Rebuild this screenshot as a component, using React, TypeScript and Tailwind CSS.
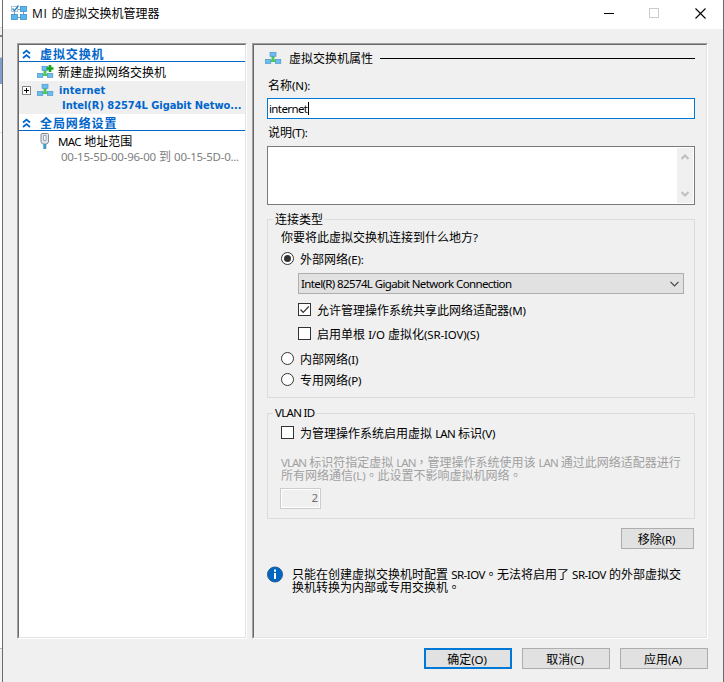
import React, { ReactNode } from "react";

const uiFont = "font-['Noto_Sans','Noto_Sans_CJK_SC',sans-serif]";
const boldFont = "font-['DejaVu_Sans_Condensed','DejaVu_Sans','Noto_Sans_CJK_SC',sans-serif] font-bold";

function SwitchIcon({ plus }: { plus?: boolean }) {
  return (
    <svg width="17" height="14" viewBox="0 0 17 14" className="block">
      <path d="M5.500 10h5" stroke="#8fb9a8" strokeWidth="2" />
      <path d="M6.500 5h3v4h1v2h-5V9h1z" fill="#4fc94f" />
      <rect x="5" y="1.300" width="6" height="4" fill="#6cbcf0" stroke="#4a98cc" strokeWidth=".7" />
      <rect x=".4" y="8.400" width="5.400" height="4" fill="#6cbcf0" stroke="#4a98cc" strokeWidth=".7" />
      <rect x="10.400" y="8.400" width="5.400" height="4" fill="#6cbcf0" stroke="#4a98cc" strokeWidth=".7" />
      {plus && <path d="M13 0v7M9.500 3.500h7" stroke="#18a51c" strokeWidth="2.600" />}
    </svg>
  );
}

function ManagerIcon() {
  return (
    <svg width="17" height="16" viewBox="0 0 17 16" className="block shrink-0">
      <path d="M3.500 7v3M12.500 6v3M7 12.500h3M7 4.500h3" stroke="#8f999f" strokeWidth="1" />
      <rect x=".5" y="1.500" width="6" height="5" fill="#fff" stroke="#a8c4d8" />
      <path d="M1.500 3.500l2 2.200L7.500.5" stroke="#2f7fc4" strokeWidth="1.300" fill="none" />
      <rect x="9.500" y="1.500" width="6" height="5" fill="#55b7f0" stroke="#3f90c4" strokeWidth=".8" />
      <rect x=".5" y="9.500" width="6" height="5" fill="#55b7f0" stroke="#3f90c4" strokeWidth=".8" />
      <rect x="9.500" y="9.500" width="6" height="5" fill="#55b7f0" stroke="#3f90c4" strokeWidth=".8" />
    </svg>
  );
}

function AdapterIcon() {
  return (
    <svg width="10" height="16" viewBox="0 0 10 16" className="block shrink-0">
      <path d="M1 1.500Q1 .5 2 .5h5.500q1 0 1 1V9L7 11H2.500L1 9z" fill="#dfe4ea" stroke="#7f8b9a" />
      <path d="M3.500 2.500h2.500v5H3.500z" fill="#f7f9fb" stroke="#8997a8" strokeWidth=".8" />
      <path d="M4.800 11v5" stroke="#419bc4" strokeWidth="3" />
    </svg>
  );
}

function TreeHeader({ children }: { children: ReactNode }) {
  return (
    <div className="flex h-[17px] items-center border-b border-[#0066cc] text-[#0066cc]">
      <svg width="9" height="10" viewBox="0 0 9 10" className="ml-[3px] mt-px shrink-0">
        <path d="M1 4.500l3.500-3 3.500 3M1 9l3.500-3L8 9" fill="none" stroke="#0066cc" strokeWidth="1.700" />
      </svg>
      <span className={`${boldFont} ml-[9px] pt-[3px] text-[12px] leading-[16px] tracking-[0.9px]`}>{children}</span>
    </div>
  );
}

function Radio({ checked, children }: { checked?: boolean; children: ReactNode }) {
  return (
    <div className="flex h-[14px] items-center">
      <svg width="13" height="13" viewBox="0 0 13 13" className="shrink-0">
        <circle cx="6.500" cy="6.500" r="6" fill="#fff" stroke="#333" />
        {checked && <circle cx="6.500" cy="6.500" r="3.500" fill="#333" />}
      </svg>
      <span className="ml-[6px] pt-[3px]">{children}</span>
    </div>
  );
}

function Checkbox({ checked, children }: { checked?: boolean; children: ReactNode }) {
  return (
    <div className="flex h-[13px] items-center">
      <svg width="13" height="13" viewBox="0 0 13 13" className="shrink-0">
        <rect x=".5" y=".5" width="12" height="12" fill="#fff" stroke="#333" />
        {checked && <path d="M2.500 6.500l2.700 2.800L10.800 3.500" fill="none" stroke="#333" strokeWidth="1.200" />}
      </svg>
      <span className="ml-[6px] pt-[3px]">{children}</span>
    </div>
  );
}

function Button({ className, children }: { className: string; children: ReactNode }) {
  return (
    <button className={`flex h-[21px] items-center justify-center bg-[#e1e1e1] pr-[2px] pt-[2px] ${className}`}>
      {children}
    </button>
  );
}

// full-width punctuation centred in its box
function P({ children }: { children: string }) {
  return <span className="font-['Noto_Sans_CJK_TC',sans-serif] leading-none">{children}</span>;
}

// latin runs are set a little smaller than the chinese text around them
function L({ children, className = "tracking-[-0.15px]" }: { children: ReactNode; className?: string }) {
  return <span className={`text-[11.5px] ${className}`}>{children}</span>;
}

function Tree() {
  return (
    <div className="h-[596px] w-[230px] border border-t-[#a0a0a0] border-l-[#a0a0a0] border-r-white border-b-white">
      <div className="h-full overflow-hidden border border-t-[#696969] border-l-[#696969] border-r-[#e3e3e3] border-b-[#e3e3e3] bg-white">
        <TreeHeader>虚拟交换机</TreeHeader>
        <div className="flex h-[19px] items-center pl-[18px]">
          <div className="mt-px"><SwitchIcon plus /></div>
          <span className="ml-[4px] pt-[2px]">新建虚拟网络交换机</span>
        </div>
        <div className={`h-[33px] bg-[#efefef] text-[11px] text-[#0066cc] ${boldFont}`}>
          <div className="flex h-[17px] items-center pl-[3px]">
            <svg width="9" height="9" viewBox="0 0 9 9" className="mt-[2px] shrink-0">
              <rect x=".5" y=".5" width="8" height="8" fill="#fff" stroke="#848484" />
              <path d="M2 4.500h5M4.500 2v5" stroke="#000" />
            </svg>
            <div className="ml-[6px] mt-px"><SwitchIcon /></div>
            <span className="ml-[5px] pt-[3px] tracking-[0.15px]">internet</span>
          </div>
          <div className="h-[16px] whitespace-nowrap pl-[43px] leading-[15px] tracking-[-0.04px]">
            Intel(R) 82574L Gigabit Netwo...
          </div>
        </div>
        <div className="h-[17px]">
          <TreeHeader>全局网络设置</TreeHeader>
        </div>
        <div className="flex h-[20px] items-center pl-[21px]">
          <AdapterIcon />
          <span className="ml-[8px] pt-[2px]"><L className="tracking-[-0.6px]">MAC</L> 地址范围</span>
        </div>
        <div className="h-[14px] whitespace-nowrap pl-[42px] leading-[11px] text-[#808080]">
          <L className="tracking-[-0.26px]">00-15-5D-00-96-00</L> 到 <L className="tracking-[-0.26px]">00-15-5D-0...</L>
        </div>
      </div>
    </div>
  );
}

function Properties() {
  return (
    <div className="h-[596px] w-[456px] border border-t-[#a0a0a0] border-l-[#a0a0a0] border-r-white border-b-white">
      <div className="h-full border border-t-[#696969] border-l-[#696969] border-r-[#e3e3e3] border-b-[#e3e3e3] pl-[13px] pr-[11px]">
        <div className="-ml-[2px] flex h-[27px] items-center">
          <div className="mb-px"><SwitchIcon /></div>
          <span className="ml-[7px] shrink-0">虚拟交换机属性</span>
          <div className="ml-[7px] h-px grow bg-black" />
        </div>
        <div className="h-[26px] pl-px leading-[27px]">名称<L>(N):</L></div>
        <div className="flex h-[21px] items-center border border-[#0078d7] bg-white pl-[1px]">
          <L className="tracking-[-0.6px]">internet</L>
          <div className="ml-px h-[13px] w-px bg-black" />
        </div>
        <div className="h-[27px] pl-px leading-[28px]">说明<L>(T):</L></div>
        <div className="flex h-[59px] justify-end border border-[#7a7a7a] bg-white p-px">
          <div className="flex w-[16px] flex-col items-center justify-between bg-[#f0f0f0] py-[6px]">
            <svg width="8" height="6" viewBox="0 0 8 6"><path d="M.5 5L4 1.500 7.500 5" stroke="#bfbfbf" strokeWidth="2" fill="none" /></svg>
            <svg width="8" height="6" viewBox="0 0 8 6"><path d="M.5 1L4 4.500 7.500 1" stroke="#bfbfbf" strokeWidth="2" fill="none" /></svg>
          </div>
        </div>

        <div className="mt-[14px] h-[179px] border border-[#dcdcdc] pl-[13px]">
          <div className="-ml-[8px] -mt-[8px] h-[14px] w-fit bg-[#f0f0f0] px-[2px] leading-[16px]">连接类型</div>
          <div className="mt-[4px] h-[14px] leading-[16px]">你要将此虚拟交换机连接到什么地方<L>?</L></div>
          <div className="mt-[7px]"><Radio checked>外部网络<L>(E):</L></Radio></div>
          <div className="ml-[17px] mt-[8px] flex h-[21px] w-[386px] items-center justify-between border border-[#adadad] bg-[#e1e1e1] pl-[2px] pr-[4px]">
            <L className="pt-px tracking-[-0.62px]">Intel(R) 82574L Gigabit Network Connection</L>
            <svg width="9" height="6" viewBox="0 0 9 6"><path d="M.5 .8l4 4 4-4" stroke="#444" strokeWidth="1.200" fill="none" /></svg>
          </div>
          <div className="ml-[17px] mt-[9px] flex flex-col gap-[11px]">
            <Checkbox checked>允许管理操作系统共享此网络适配器<L>(M)</L></Checkbox>
            <Checkbox>启用单根 <L>I/O</L> 虚拟化<L>(SR-IOV)(S)</L></Checkbox>
          </div>
          <div className="mt-[11px] flex flex-col gap-[7px]">
            <Radio>内部网络<L>(I)</L></Radio>
            <Radio>专用网络<L>(P)</L></Radio>
          </div>
        </div>

        <div className="mt-[15px] h-[106px] border border-[#dcdcdc] pl-[13px]">
          <div className="-ml-[8px] -mt-[8px] h-[14px] w-fit bg-[#f0f0f0] px-[2px] leading-[14px]"><L className="tracking-[-0.7px]">VLAN ID</L></div>
          <div className="mt-[6px]"><Checkbox>为管理操作系统启用虚拟 <L className="tracking-[-0.8px]">LAN</L> 标识<L>(V)</L></Checkbox></div>
          <div className="mt-[17px] whitespace-nowrap leading-[13px] text-[#a0a0a0]">
            <div className="h-[13px]"><L className="tracking-[-1px]">VLAN</L> 标识符指定虚拟 <L className="tracking-[-1px]">LAN</L><P>，</P>管理操作系统使用该 <L className="tracking-[-1px]">LAN</L> 通过此网络适配器进行</div>
            <div className="h-[13px]">所有网络通信<L>(L)</L><P>。</P>此设置不影响虚拟机网络<P>。</P></div>
          </div>
          <div className="-ml-px mt-[6px] h-[21px] w-[41px] border border-[#cccccc] bg-white p-px">
            <div className="h-[17px] bg-[#f0f0f0] pr-px text-right text-[11.5px] leading-[16px] text-[#6d6d6d]">2</div>
          </div>
        </div>

        <Button className="ml-auto mr-px mt-[9px] w-[73px] border border-[#adadad]">移除<L>(R)</L></Button>

        <div className="mt-[17px] flex">
          <svg width="16" height="17" viewBox="0 0 16 17" className="shrink-0">
            <circle cx="8" cy="8.500" r="7.500" fill="#0067c0" stroke="#20589a" />
            <path d="M8 3.500v2.200M8 7v6" stroke="#fff" strokeWidth="2" />
          </svg>
          <div className="ml-[9px] mt-[2px] whitespace-nowrap leading-[13px]">
            <div className="h-[13px]">只能在创建虚拟交换机时配置 <L className="tracking-[-0.5px]">SR-IOV</L><P>。</P>无法将启用了 <L className="tracking-[-0.5px]">SR-IOV</L> 的外部虚拟交</div>
            <div className="h-[13px]">换机转换为内部或专用交换机<P>。</P></div>
          </div>
        </div>
      </div>
    </div>
  );
}

function App() {
  return (
    <div className={`flex h-[682px] w-[724px] overflow-hidden bg-[#f0f0f0] text-[12px] text-black ${uiFont}`}>
      {/* sliver of the window behind the dialog */}
      <div className="flex w-[2px] shrink-0 flex-col bg-white">
        <div className="h-[28px] border-b border-[#d5d5d5]" />
        <div className="h-[9px] border-b-2 border-[#808080] bg-[#f0f0f0]" />
        <div className="h-[21px] border-b border-[#c8c8c8] bg-[#f0f0f0]" />
        <div className="h-[26px] bg-[#7f9fcc]" />
        <div className="h-[49px] border-b border-[#dddddd]" />
        <div className="grow" />
        <div className="h-[34px] border-t border-[#bbbbbb] bg-[#f0f0f0]" />
      </div>
      <div className="flex w-[722px] flex-col border-x border-[#6b6b6b]">
        <div className="flex h-[29px] shrink-0 items-center bg-white pl-[8px]">
          <div className="mb-[3px]"><ManagerIcon /></div>
          <span className="mb-[2px] ml-[4px] font-['Open_Sans','Noto_Sans_CJK_SC',sans-serif]"><span className="mr-[1px] tracking-[0.6px]">MI</span> 的虚拟交换机管理器</span>
          <svg width="104" height="11" viewBox="0 0 104 11" className="mb-[2px] ml-auto mr-[16px]">
            <path d="M1 5.500h10" stroke="#000" />
            <rect x="46.500" y=".5" width="9" height="9" fill="none" stroke="#cccccc" />
            <path d="M92.500 .5l10 10M102.500 .5l-10 10" stroke="#000" strokeWidth="1.100" />
          </svg>
        </div>
        <div className="flex gap-[5px] pl-[14px] pt-[14px]">
          <Tree />
          <Properties />
        </div>
        <div className="mt-[9px] flex justify-end gap-[10px] pr-[15px]">
          <Button className="w-[88px] border-2 border-[#0078d7]">确定<L>(O)</L></Button>
          <Button className="w-[88px] border border-[#adadad]">取消<L>(C)</L></Button>
          <Button className="w-[88px] border border-[#adadad]">应用<L>(A)</L></Button>
        </div>
      </div>
    </div>
  );
}

export default App;
